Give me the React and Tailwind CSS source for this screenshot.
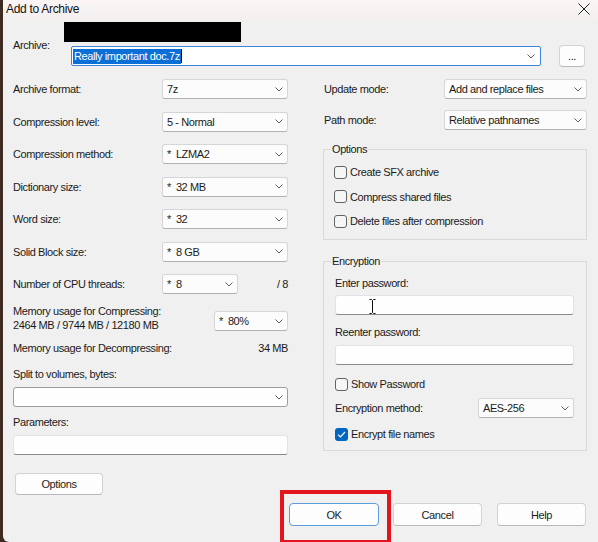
import React from 'react';

const Chevron = () => (
    <svg width="8" height="5" viewBox="0 0 8 5" className="shrink-0">
        <path d="M0.5 0.5 L4 4 L7.5 0.5" fill="none" stroke="#5f5f5f" strokeWidth="1" />
    </svg>
);

const Combo = ({ value, star, className = '' }) => (
    <div className={`h-[20px] flex items-center justify-between pl-[4px] pr-[4px] bg-[#fcfcfc] border border-[#d6d6d6] border-b-[#b2b2b2] rounded-[3px] ${className}`}>
        <span className="whitespace-pre">
            {star && <span className="mr-[5px]">*</span>}
            {value}
        </span>
        <Chevron />
    </div>
);

const Field = ({ className = '', children }) => (
    <div className={`h-[20px] flex items-center bg-[#fefefe] border border-[#e3e3e3] border-b-[#8a8a8a] rounded-[3px] ${className}`}>
        {children}
    </div>
);

const Check = ({ checked, label, className = '' }) => (
    <div className={`h-[16px] flex items-center ${className}`}>
        {checked ? (
            <div className="w-[13px] h-[13px] rounded-[3px] bg-[#0067c0] flex items-center justify-center">
                <svg width="9" height="7" viewBox="0 0 9 7">
                    <path d="M1 3.6 L3.4 6 L8 1" fill="none" stroke="#fff" strokeWidth="1.2" />
                </svg>
            </div>
        ) : (
            <div className="w-[13px] h-[13px] rounded-[3px] border border-[#636363] bg-[#f6f6f6]"></div>
        )}
        <span className="ml-[3px]">{label}</span>
    </div>
);

const Button = ({ children, className = '' }) => (
    <div className={`flex items-center justify-center bg-[#fdfdfd] border border-[#d3d3d3] border-b-[#b9b9b9] rounded-[4px] ${className}`}>
        {children}
    </div>
);

const Row = ({ label, children }) => (
    <div className="h-[20px] flex items-center justify-between">
        <span>{label}</span>
        {children}
    </div>
);

export default function App() {
    return (
        <div className="w-[598px] h-[542px] bg-[#3f2a22] overflow-hidden">
            <div className="ml-[3px] h-[542px] bg-[#f0f0f0] rounded-bl-[6px] text-[11px] leading-[14px] tracking-[-0.4px] text-[#1b1b1b] font-['Liberation_Sans',Arial,sans-serif]">
                {/* Title bar */}
                <div className="h-[22px] flex items-start justify-between pl-[3px] pr-[8px] pt-[2px] bg-gradient-to-b from-[#fbf5f5] to-[#f2efef]">
                    <span className="text-[12px] leading-[15px] tracking-[-0.3px] text-[#111]">Add to Archive</span>
                    <svg width="12" height="12" viewBox="0 0 12 12" className="mt-[1px]">
                        <path d="M0.5 0.5 L11.5 11.5 M11.5 0.5 L0.5 11.5" stroke="#222" strokeWidth="1" />
                    </svg>
                </div>

                {/* Archive path */}
                <div className="flex pl-[10px]">
                    <div className="w-[51px] pt-[16px]">Archive:</div>
                    <div>
                        <div className="h-[20px] w-[177px] bg-black"></div>
                        <div className="flex items-center mt-[3px] ml-[7px]">
                            <div className="w-[470px] h-[20px] flex items-center justify-between pl-[1px] pr-[5px] bg-white border border-[#3c84d4] rounded-[2px]">
                                <div className="flex items-center">
                                    <span className="bg-[#0a6fd6] text-white px-[1px] leading-[15px]">Really important doc.7z</span>
                                    <span className="w-[1px] h-[14px] bg-black"></span>
                                </div>
                                <Chevron />
                            </div>
                            <Button className="ml-[18px] w-[26px] h-[22px] items-end pb-[3px]">...</Button>
                        </div>
                    </div>
                </div>

                {/* Main */}
                <div className="flex pl-[10px] mt-[12px]">
                    {/* Left column */}
                    <div className="w-[275px] flex flex-col">
                        <div className="flex flex-col gap-[12.5px]">
                            <Row label="Archive format:"><Combo className="w-[126px]" value="7z" /></Row>
                            <Row label="Compression level:"><Combo className="w-[126px]" value="5 - Normal" /></Row>
                            <Row label="Compression method:"><Combo className="w-[126px]" star value="LZMA2" /></Row>
                            <Row label="Dictionary size:"><Combo className="w-[126px]" star value="32 MB" /></Row>
                            <Row label="Word size:"><Combo className="w-[126px]" star value="32" /></Row>
                            <Row label="Solid Block size:"><Combo className="w-[126px]" star value="8 GB" /></Row>
                            <div className="h-[20px] flex items-center">
                                <span className="w-[149px]">Number of CPU threads:</span>
                                <Combo className="w-[76px]" star value="8" />
                                <span className="flex-1 text-right pr-[0px]">/ 8</span>
                            </div>
                        </div>

                        <div className="flex justify-between mt-[10px]">
                            <div>
                                <div>Memory usage for Compressing:</div>
                                <div>2464 MB / 9744 MB / 12180 MB</div>
                            </div>
                            <Combo className="w-[74px] mt-[7px]" star value="80%" />
                        </div>

                        <div className="flex justify-between mt-[9px]">
                            <span>Memory usage for Decompressing:</span>
                            <span>34 MB</span>
                        </div>

                        <div className="mt-[12px]">Split to volumes, bytes:</div>
                        <div className="mt-[6px] h-[20px] flex items-center justify-end pr-[4px] bg-[#fefefe] border border-[#9d9d9d] rounded-[3px]">
                            <Chevron />
                        </div>

                        <div className="mt-[8px]">Parameters:</div>
                        <Field className="mt-[6px]" />

                        <Button className="mt-[18px] ml-[2px] w-[88px] h-[22px]">Options</Button>
                    </div>

                    {/* Right column */}
                    <div className="w-[264px] ml-[35px] flex flex-col">
                        <div className="pl-[1px] flex flex-col gap-[11px]">
                            <Row label="Update mode:"><Combo className="w-[143px]" value="Add and replace files" /></Row>
                            <Row label="Path mode:"><Combo className="w-[143px]" value="Relative pathnames" /></Row>
                        </div>

                        <fieldset className="mt-[12px] border border-[#d9d9d9] pl-[10px] pr-[12px] pb-[10px]">
                            <legend className="ml-[-3px] px-[1px]">Options</legend>
                            <Check className="mt-[8px]" label="Create SFX archive" />
                            <Check className="mt-[8.5px]" label="Compress shared files" />
                            <Check className="mt-[8.5px]" label="Delete files after compression" />
                        </fieldset>

                        <fieldset className="mt-[14px] border border-[#d9d9d9] pl-[11px] pr-[12px] pb-[8px]">
                            <legend className="ml-[-4px] px-[1px]">Encryption</legend>
                            <div className="mt-[8px]">Enter password:</div>
                            <Field className="mt-[5px]">
                                <svg width="7" height="15" viewBox="0 0 7 15" className="ml-[33px] mt-[3px]">
                                    <path d="M0.5 0.5 H2.5 L3.5 1.5 L4.5 0.5 H6.5 M3.5 1.5 V13.5 M0.5 14.5 H2.5 L3.5 13.5 L4.5 14.5 H6.5" fill="none" stroke="#111" strokeWidth="1" />
                                </svg>
                            </Field>
                            <div className="mt-[10px]">Reenter password:</div>
                            <Field className="mt-[6px]" />
                            <Check className="mt-[11px]" label="Show Password" />
                            <div className="mt-[6px] h-[20px] flex items-center justify-between">
                                <span>Encryption method:</span>
                                <Combo className="w-[96px]" value="AES-256" />
                            </div>
                            <Check checked className="mt-[8px]" label="Encrypt file names" />
                        </fieldset>

                        {/* Dialog buttons */}
                        <div className="flex items-start mt-[39px] -ml-[43px]">
                            <div className="border-[4px] border-[#e3141b] pl-[5px] pt-[9px] pr-[8px] pb-[14px]">
                                <div className="w-[90px] h-[23px] flex items-center justify-center bg-[#fdfdfd] border border-[#5e9cdb] rounded-[4px]">OK</div>
                            </div>
                            <Button className="mt-[13px] ml-[2px] w-[89px] h-[23px]">Cancel</Button>
                            <Button className="mt-[13px] ml-[15px] w-[89px] h-[23px]">Help</Button>
                        </div>
                    </div>
                </div>
            </div>
        </div>
    );
}
